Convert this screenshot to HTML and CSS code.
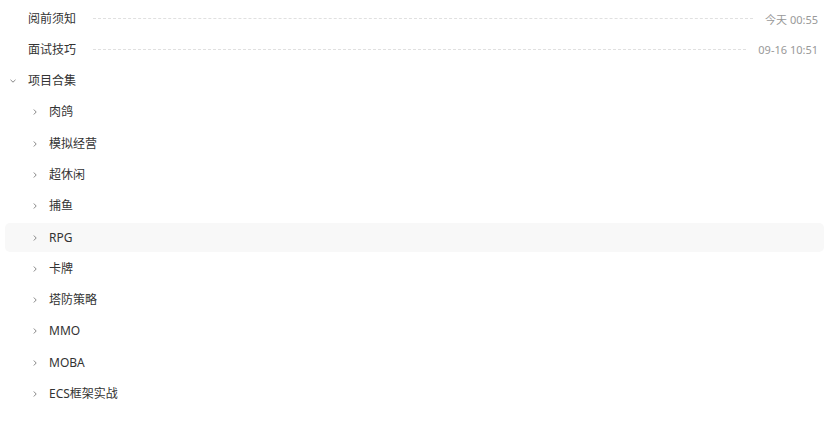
FILE: index.html
```html
<!DOCTYPE html>
<html>
<head>
<meta charset="utf-8">
<link rel="stylesheet" href="styles.css">
</head>
<body>
<div class="tree">
  <div class="row doc">
    <span class="title">阅前须知</span><span class="dash"></span><span class="date">今天 00:55</span>
  </div>
  <div class="row doc">
    <span class="title">面试技巧</span><span class="dash"></span><span class="date">09-16 10:51</span>
  </div>
  <div class="row folder open">
    <span class="caret"><svg viewBox="0 0 8 8" width="8" height="8"><path d="M1.5 2.8 L4 5.2 L6.5 2.8" fill="none" stroke="#888" stroke-width="1"/></svg></span>
    <span class="title">项目合集</span>
  </div>
  <div class="children">
    <div class="row folder"><span class="caret"><svg viewBox="0 0 8 8" width="8" height="8"><path d="M2.8 1.5 L5.2 4 L2.8 6.5" fill="none" stroke="#888" stroke-width="1"/></svg></span><span class="title">肉鸽</span></div>
    <div class="row folder"><span class="caret"><svg viewBox="0 0 8 8" width="8" height="8"><path d="M2.8 1.5 L5.2 4 L2.8 6.5" fill="none" stroke="#888" stroke-width="1"/></svg></span><span class="title">模拟经营</span></div>
    <div class="row folder"><span class="caret"><svg viewBox="0 0 8 8" width="8" height="8"><path d="M2.8 1.5 L5.2 4 L2.8 6.5" fill="none" stroke="#888" stroke-width="1"/></svg></span><span class="title">超休闲</span></div>
    <div class="row folder"><span class="caret"><svg viewBox="0 0 8 8" width="8" height="8"><path d="M2.8 1.5 L5.2 4 L2.8 6.5" fill="none" stroke="#888" stroke-width="1"/></svg></span><span class="title">捕鱼</span></div>
    <div class="row folder hover"><span class="caret"><svg viewBox="0 0 8 8" width="8" height="8"><path d="M2.8 1.5 L5.2 4 L2.8 6.5" fill="none" stroke="#888" stroke-width="1"/></svg></span><span class="title">RPG</span></div>
    <div class="row folder"><span class="caret"><svg viewBox="0 0 8 8" width="8" height="8"><path d="M2.8 1.5 L5.2 4 L2.8 6.5" fill="none" stroke="#888" stroke-width="1"/></svg></span><span class="title">卡牌</span></div>
    <div class="row folder"><span class="caret"><svg viewBox="0 0 8 8" width="8" height="8"><path d="M2.8 1.5 L5.2 4 L2.8 6.5" fill="none" stroke="#888" stroke-width="1"/></svg></span><span class="title">塔防策略</span></div>
    <div class="row folder"><span class="caret"><svg viewBox="0 0 8 8" width="8" height="8"><path d="M2.8 1.5 L5.2 4 L2.8 6.5" fill="none" stroke="#888" stroke-width="1"/></svg></span><span class="title">MMO</span></div>
    <div class="row folder"><span class="caret"><svg viewBox="0 0 8 8" width="8" height="8"><path d="M2.8 1.5 L5.2 4 L2.8 6.5" fill="none" stroke="#888" stroke-width="1"/></svg></span><span class="title">MOBA</span></div>
    <div class="row folder"><span class="caret"><svg viewBox="0 0 8 8" width="8" height="8"><path d="M2.8 1.5 L5.2 4 L2.8 6.5" fill="none" stroke="#888" stroke-width="1"/></svg></span><span class="title">ECS框架实战</span></div>
  </div>
</div>
</body>
</html>
```

FILE: styles.css
```css
html, body {
  margin: 0;
  padding: 0;
  background: #fff;
}
body {
  font-family: "Noto Sans", "Noto Sans CJK SC", sans-serif;
  font-size: 12px;
  color: #333;
}
.tree {
  padding: 4px 12px 0 5px;
  display: flex;
  flex-direction: column;
  gap: 2.3px;
}
.children {
  display: flex;
  flex-direction: column;
  gap: 2.3px;
}
.row {
  height: 29px;
  display: flex;
  align-items: center;
  border-radius: 5px;
  padding: 0 6px 0 23px;
}
.row.folder {
  padding-left: 4px;
}
.children .row.folder {
  padding-left: 26px;
}
.row.hover {
  background: #f8f8f8;
}
.caret {
  width: 8px;
  height: 8px;
  display: inline-flex;
  margin-right: 11px;
}
.caret svg {
  display: block;
}
.children .caret {
  margin-right: 10px;
}
.title {
  white-space: nowrap;
  line-height: 16px;
}
.dash {
  flex: 1;
  border-top: 1px dashed #e0e0e0;
  margin: 0 12px 0 17px;
  height: 0;
}
.date {
  color: #999;
  font-size: 11px;
  white-space: nowrap;
}
```
